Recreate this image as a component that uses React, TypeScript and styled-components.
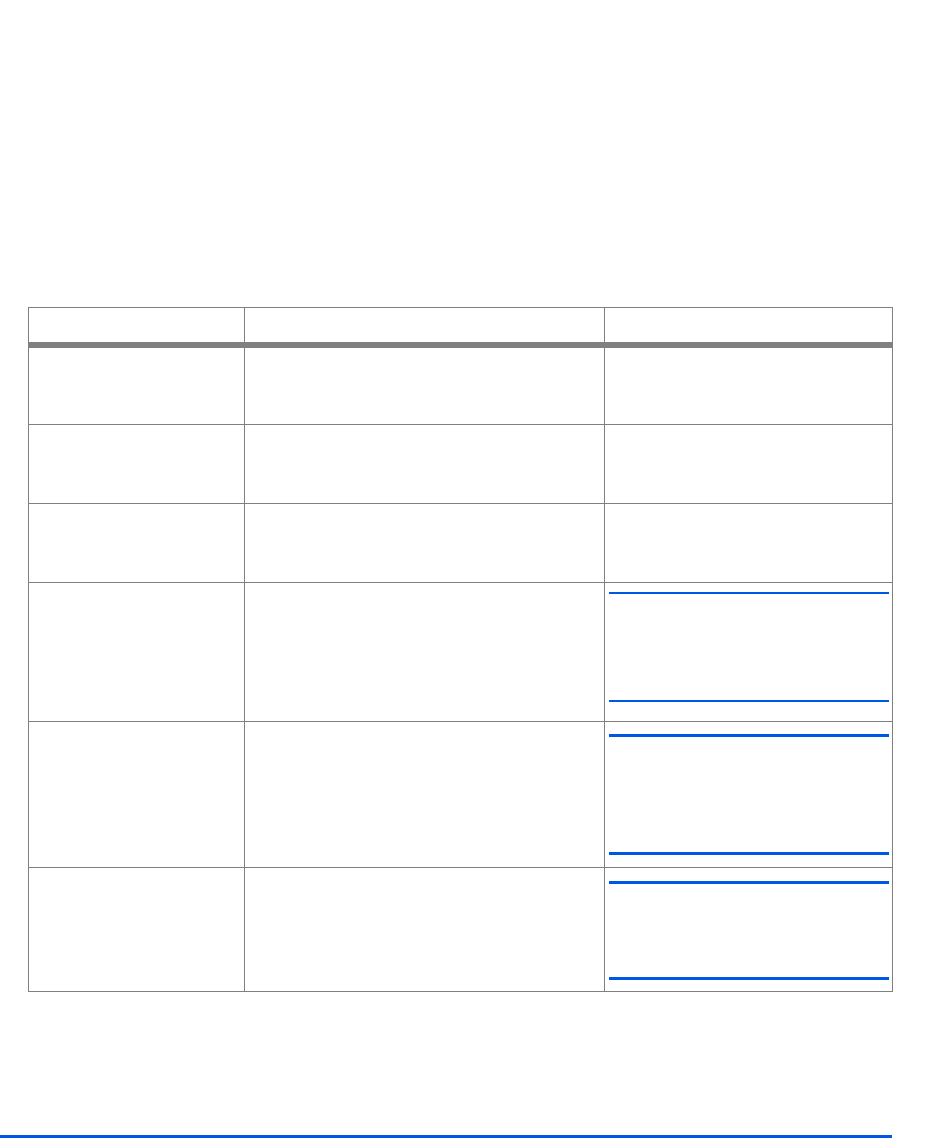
import styled, { createGlobalStyle } from 'styled-components'

const GlobalStyle = createGlobalStyle`
  html, body {
    margin: 0;
    padding: 0;
    background: #fff;
    font-family: "Liberation Sans", Arial, sans-serif;
  }
`

const GRID = '#808080'
const BLUE = '#0057e4'

// ─── Page ─────────────────────────────────────────────────────────────────────

const Page = styled.div`
  width: 940px;
  height: 1138px;
  padding-top: 307px;
  box-sizing: border-box;
  display: flex;
  flex-direction: column;
`

const Table = styled.div`
  margin-left: 28px;
  width: 864px;
  border-left: 1px solid ${GRID};
  border-top: 1px solid ${GRID};
  display: flex;
  flex-direction: column;
`

const Row = styled.div<{ $h: number }>`
  display: grid;
  grid-template-columns: 216px 360px 288px;
  height: ${({ $h }) => $h}px;
`

const Cell = styled.div<{ $head?: boolean }>`
  border-right: 1px solid ${GRID};
  border-bottom: ${({ $head }) => ($head ? 6 : 1)}px solid ${GRID};
  display: flex;
  flex-direction: column;
`

// note block framed by two blue rules
const Note = styled.div<{ $top: number; $rule: number; $inner: number }>`
  margin: ${({ $top }) => $top}px 3px 0 4px;
  height: ${({ $inner }) => $inner}px;
  border-top: ${({ $rule }) => $rule}px solid ${BLUE};
  border-bottom: ${({ $rule }) => $rule}px solid ${BLUE};
`

const FooterRule = styled.div`
  margin-top: auto;
  width: 892px;
  height: 3px;
  background: ${BLUE};
`

type NoteSpec = { top: number; rule: number; inner: number }

const ROWS: { h: number; note?: NoteSpec }[] = [
  { h: 77 },
  { h: 79 },
  { h: 79 },
  { h: 139, note: { top: 9, rule: 2, inner: 106 } },
  { h: 146, note: { top: 12, rule: 3, inner: 115 } },
  { h: 124, note: { top: 13, rule: 3, inner: 93 } },
]

export default function App() {
  return (
    <>
      <GlobalStyle />
      <Page>
        <Table>
          <Row $h={40}>
            <Cell $head />
            <Cell $head />
            <Cell $head />
          </Row>
          {ROWS.map((r, i) => (
            <Row key={i} $h={r.h}>
              <Cell />
              <Cell />
              <Cell>
                {r.note && <Note $top={r.note.top} $rule={r.note.rule} $inner={r.note.inner} />}
              </Cell>
            </Row>
          ))}
        </Table>
        <FooterRule />
      </Page>
    </>
  )
}
